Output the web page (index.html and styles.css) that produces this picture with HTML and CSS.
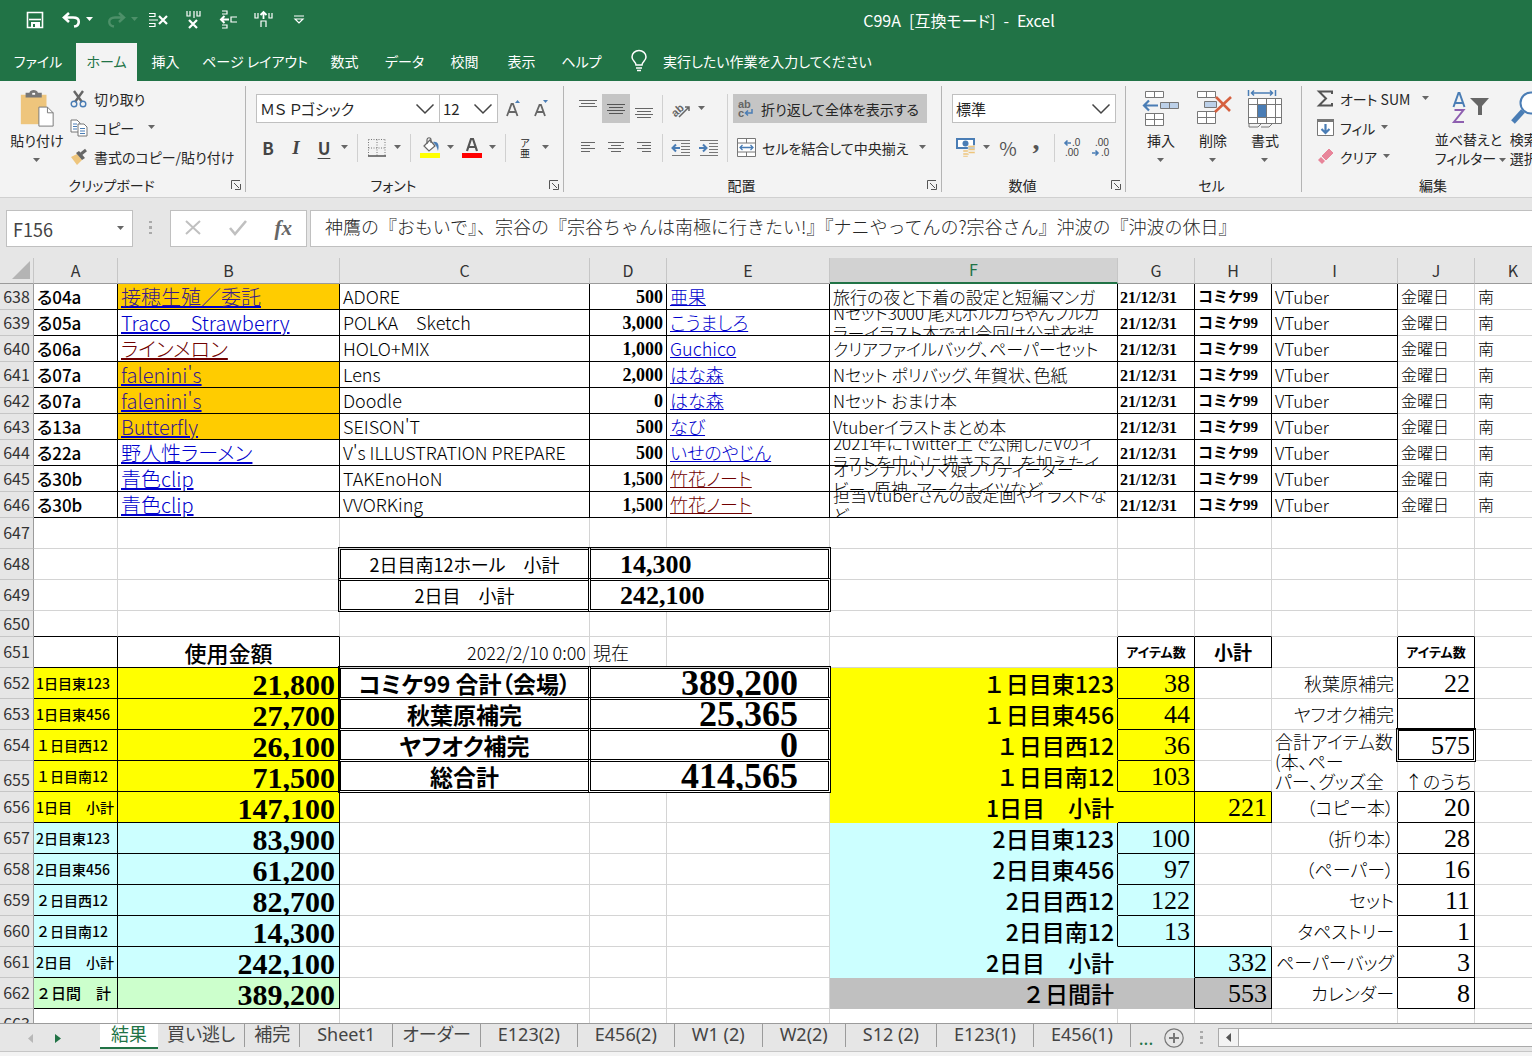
FILE: index.html
```html
<!DOCTYPE html>
<html lang="ja">
<head>
<meta charset="utf-8">
<title>C99A [互換モード] - Excel</title>
<link rel="stylesheet" href="styles.css">
</head>
<body>
<svg width="0" height="0" class="defs" aria-hidden="true">
  <defs>
    <symbol id="caret" viewBox="0 0 8 5"><path d="M0 0h7L3.500 4z" fill="currentColor"/></symbol>
    <symbol id="chev" viewBox="0 0 20 12"><path d="M1.500 1.500 10 10l8.500-8.500" fill="none" stroke="#444" stroke-width="1.500"/></symbol>
    <symbol id="launch" viewBox="0 0 10 10"><path d="M.5 9V.5H9M3 3l5 5M9.500 4v5.500H4" fill="none" stroke="#555"/></symbol>
  </defs>
</svg>

<header class="titlebar">
  <div class="qat">
    <button class="q-save" aria-label="上書き保存"><svg width="18" height="18" viewBox="0 0 18 18"><path d="M1.500 1.500h15v15h-15z" fill="none" stroke="#fff" stroke-width="1.600"/><path d="M3 8.500h12" stroke="#fff" stroke-width="1.600"/><path d="M5 11h9v6H5z" fill="#fff"/><path d="M7 13h2v3H7z" fill="#217346"/></svg></button>
    <button class="q-undo" aria-label="元に戻す"><svg width="19" height="16" viewBox="0 0 19 16"><path d="M7 1 2 5.500 7 10M2.500 5.500H11c8 0 7 8 1 9" fill="none" stroke="#fff" stroke-width="2.600"/></svg><svg class="caret" width="8" height="5"><use href="#caret"/></svg></button>
    <button class="q-redo" aria-label="やり直し"><svg width="19" height="16" viewBox="0 0 19 16"><path d="M12 1l5 4.500L12 10M16.500 5.500H8c-8 0-7 8-1 9" fill="none" stroke="#4d9069" stroke-width="2.400"/></svg><svg class="caret" width="8" height="5"><use href="#caret"/></svg></button>
    <button class="q-tool" aria-label="行の削除"><svg width="20" height="18" viewBox="0 0 20 18"><path d="M0 2.500h6v3H0M0 9h9M0 12.500h6v3H0" fill="none" stroke="#fff" stroke-width="1.200"/><path d="m10 5 8 8m0-8-8 8" stroke="#fff" stroke-width="2.200"/></svg></button>
    <button class="q-tool" aria-label="列の削除"><svg width="18" height="20" viewBox="0 0 18 20"><path d="M2 1v5h3V1M9 1v7M12 1v5h3V1" fill="none" stroke="#fff" stroke-width="1.200"/><path d="m4 10 8 8m0-8-8 8" stroke="#fff" stroke-width="2.200"/></svg></button>
    <button class="q-tool" aria-label="行の挿入"><svg width="18" height="20" viewBox="0 0 18 20"><path d="M2 1h5v3H2M2 15h5v3H2M17 7h-6v5h6" fill="none" stroke="#fff" stroke-width="1.200"/><path d="M1 9.500h8M4.500 6 1 9.500 4.500 13" fill="none" stroke="#fff" stroke-width="2"/></svg></button>
    <button class="q-tool" aria-label="列の挿入"><svg width="20" height="18" viewBox="0 0 20 18"><path d="M1 2v5h3V2M15 2v5h3V2M7 16v-6h5v6" fill="none" stroke="#fff" stroke-width="1.200"/><path d="M9.500 8V1M6.500 4l3-3 3 3" fill="none" stroke="#fff" stroke-width="1.800"/></svg></button>
    <button class="q-tool" aria-label="ユーザー設定"><svg width="12" height="10" viewBox="0 0 12 10"><path d="M1 1h10M2 4h8L6 8z" fill="none" stroke="#fff" stroke-width="1.200"/></svg></button>
  </div>
  <h1 class="title">C99A&ensp;[互換モード]&ensp;-&ensp;Excel</h1>
</header>

<nav class="tabs">
  <button class="file">ファイル</button>
  <button class="active">ホーム</button>
  <button>挿入</button>
  <button class="long">ページ レイアウト</button>
  <button>数式</button>
  <button class="mid">データ</button>
  <button>校閲</button>
  <button>表示</button>
  <button class="mid">ヘルプ</button>
  <button class="tell"><svg width="18" height="22" viewBox="0 0 18 22"><path d="M6 15c0-3-4-4-4-8a7 6.500 0 0 1 14 0c0 4-4 5-4 8zM6 18h6M7 20.500h4" fill="none" stroke="#fff" stroke-width="1.500"/></svg>実行したい作業を入力してください</button>
</nav>

<section class="ribbon" aria-label="リボン">
  <div class="group g-clip">
    <div class="body">
      <button class="big paste"><svg width="36" height="40" viewBox="0 0 36 40"><path d="M1 5h27v31H1z" fill="#eec57c"/><path d="M6 3h4c1-4 8-4 9 0h4v5H6z" fill="#777"/><path d="M13 3h3v2h-3z" fill="#fff"/><path d="M20 18h9l6 6v14H20z" fill="#fff" stroke="#777"/><path d="M29 18v6h6" fill="none" stroke="#777"/></svg><span>貼り付け</span><svg class="caret" width="8" height="5"><use href="#caret"/></svg></button>
      <div class="stack">
        <button><svg width="18" height="18" viewBox="0 0 18 18"><path d="m4 1 8 11M13 1 5 12" stroke="#666" stroke-width="2.400"/><circle cx="4" cy="14" r="2.800" fill="none" stroke="#4a7db5" stroke-width="1.400"/><circle cx="13" cy="14" r="2.800" fill="none" stroke="#4a7db5" stroke-width="1.400"/></svg>切り取り</button>
        <button><svg width="18" height="18" viewBox="0 0 18 18"><path d="M1 1h6l3 3v9H1z" fill="#fff" stroke="#777"/><path d="M3 5h4M3 7.500h4M3 10h4" stroke="#4a7db5"/><path d="M8 5h6l3 3v9H8z" fill="#fff" stroke="#777"/><path d="M10 9.500h5M10 12h5M10 14.500h5" stroke="#4a7db5"/></svg>コピー<svg class="caret far" width="8" height="5"><use href="#caret"/></svg></button>
        <button><svg width="18" height="18" viewBox="0 0 18 18"><path d="m1 9 6-3 5 6-5 5z" fill="#eec57c"/><path d="m6 5 3-2 6 7-3 2z" fill="#666"/><path d="m11 6 5-4" stroke="#666" stroke-width="3"/></svg>書式のコピー/貼り付け</button>
      </div>
    </div>
    <div class="label"><span>クリップボード</span><button aria-label="クリップボードの詳細"><svg width="10" height="10"><use href="#launch"/></svg></button></div>
  </div>

  <div class="group g-font">
    <div class="body rows">
      <div class="row">
        <label class="combo c-name"><select aria-label="フォント"><option>ＭＳ Ｐゴシック</option></select><svg width="20" height="12"><use href="#chev"/></svg></label>
        <label class="combo c-size"><select aria-label="フォント サイズ"><option>12</option></select><svg width="20" height="12"><use href="#chev"/></svg></label>
        <button class="tool grow" aria-label="拡大"><svg width="16" height="18" viewBox="0 0 16 18"><path d="M1 16 5.500 4h1.500l4.500 12M3 12h7" fill="none" stroke="#666" stroke-width="1.800"/><path d="m9 3 2.500-3L14 3z" fill="#4a7db5"/></svg></button>
        <button class="tool" aria-label="縮小"><svg width="16" height="18" viewBox="0 0 16 18"><path d="M1 16 5.500 5h1.500l4 11M3 12h7" fill="none" stroke="#666" stroke-width="1.800"/><path d="m9 0 2.500 3L14 0z" fill="#4a7db5"/></svg></button>
      </div>
      <div class="row tools">
        <button class="tool b">B</button><button class="tool i">I</button><button class="tool u">U</button><button class="drop" aria-label="下線"><svg class="caret" width="8" height="5"><use href="#caret"/></svg></button>
        <i class="sep wide"></i>
        <button class="tool" aria-label="罫線"><svg width="18" height="18" viewBox="0 0 18 18"><path d="M.5.5h17M.5.5v17M17 .5v17M9 .5v17M.5 9h17" fill="none" stroke="#777" stroke-dasharray="1 1.500"/><path d="M0 17h18" stroke="#555" stroke-width="1.500"/></svg></button><button class="drop" aria-label="罫線の種類"><svg class="caret" width="8" height="5"><use href="#caret"/></svg></button>
        <i class="sep wide"></i>
        <button class="tool" aria-label="塗りつぶしの色"><svg width="20" height="21" viewBox="0 0 20 21"><path d="M0 16h20v5H0z" fill="#ff0"/><path d="m4 9 6-6 5 6-6 5z" fill="#fff" stroke="#666" stroke-width="1.200"/><path d="M7 7V3c0-3 4-3 4 0v3" fill="none" stroke="#666" stroke-width="1.200"/><path d="M13 5c4-1 7 2 5 9-1-3-1-5-5-9" fill="#4a7db5"/></svg></button><button class="drop" aria-label="塗りつぶしの色を選ぶ"><svg class="caret" width="8" height="5"><use href="#caret"/></svg></button>
        <button class="tool" aria-label="フォントの色"><svg width="20" height="21" viewBox="0 0 20 21"><path d="M0 16h20v5H0z" fill="#f00"/><path d="m5 14 4-12h2l4 12M6.500 10h7" fill="none" stroke="#555" stroke-width="2.200"/></svg></button><button class="drop" aria-label="フォントの色を選ぶ"><svg class="caret" width="8" height="5"><use href="#caret"/></svg></button>
        <i class="sep wide"></i>
        <button class="tool ruby"><span>ア</span><span>亜</span></button><button class="drop" aria-label="ふりがな"><svg class="caret" width="8" height="5"><use href="#caret"/></svg></button>
      </div>
    </div>
    <div class="label"><span>フォント</span><button aria-label="フォントの詳細"><svg width="10" height="10"><use href="#launch"/></svg></button></div>
  </div>

  <div class="group g-align">
    <div class="body">
      <div class="rows">
        <div class="row">
          <button class="tool" aria-label="上揃え"><svg width="18" height="18" viewBox="0 0 18 18"><path d="M0 .5h18M2 3.500h14M0 6.500h18" stroke="#666"/></svg></button>
          <button class="tool on" aria-label="上下中央揃え"><svg width="18" height="18" viewBox="0 0 18 18"><path d="M0 4.500h18M2 7.500h14M0 10.500h18M2 13.500h14" stroke="#555"/></svg></button>
          <button class="tool" aria-label="下揃え"><svg width="18" height="18" viewBox="0 0 18 18"><path d="M0 8.500h18M2 11.500h14M0 14.500h18M2 17.500h14" stroke="#666"/></svg></button>
          <i class="sep"></i>
          <button class="tool" aria-label="方向"><svg width="20" height="18" viewBox="0 0 20 18"><text x="-1" y="14" class="glyph-ab" transform="rotate(-42 6 9)">ab</text><path d="M8 17 18 7M14 7h4v4" fill="none" stroke="#666" stroke-width="1.500"/></svg></button><button class="drop" aria-label="方向を選ぶ"><svg class="caret" width="8" height="5"><use href="#caret"/></svg></button>
        </div>
        <div class="row">
          <button class="tool" aria-label="左揃え"><svg width="16" height="14" viewBox="0 0 16 14"><path d="M1 1.500h14M1 4.500h9M1 7.500h14M1 10.500h9" stroke="#666"/></svg></button>
          <button class="tool" aria-label="中央揃え"><svg width="16" height="14" viewBox="0 0 16 14"><path d="M0 1.500h16M3 4.500h10M0 7.500h16M3 10.500h10" stroke="#666"/></svg></button>
          <button class="tool" aria-label="右揃え"><svg width="16" height="14" viewBox="0 0 16 14"><path d="M1 1.500h14M6 4.500h9M1 7.500h14M6 10.500h9" stroke="#666"/></svg></button>
          <i class="sep"></i>
          <button class="tool" aria-label="インデントを減らす"><svg width="20" height="18" viewBox="0 0 20 18"><path d="M1 1.500h18M10 4.500h9M10 7.500h9M10 10.500h9M10 13.500h9M1 16.500h18" stroke="#777"/><path d="M1 9h8M5 5.500 1.500 9 5 12.500" fill="none" stroke="#4a7db5" stroke-width="2"/></svg></button>
          <button class="tool" aria-label="インデントを増やす"><svg width="20" height="18" viewBox="0 0 20 18"><path d="M1 1.500h18M10 4.500h9M10 7.500h9M10 10.500h9M10 13.500h9M1 16.500h18" stroke="#777"/><path d="M0 9h8M4 5.500 7.500 9 4 12.500" fill="none" stroke="#4a7db5" stroke-width="2"/></svg></button>
        </div>
      </div>
      <i class="sep tall"></i>
      <div class="rows">
        <button class="wide on"><svg width="18" height="20" viewBox="0 0 18 20"><text x="1" y="9" class="glyph-ab">ab</text><text x="1" y="18" class="glyph-ab">c</text><path d="M15 10v4H9M11 11.500 8.500 14l2.500 2.500" fill="none" stroke="#4a7db5" stroke-width="1.500"/></svg>折り返して全体を表示する</button>
        <button class="wide"><svg width="19" height="19" viewBox="0 0 19 19"><path d="M.5.5h18v18H.5zM.5 5h18M.5 14h18M9.500 0v5M9.500 14v5" fill="#fff" stroke="#777"/><path d="M3 9.500h13M5.500 7 3 9.500 5.500 12M13.500 7 16 9.500 13.500 12" fill="none" stroke="#4a7db5" stroke-width="1.300"/></svg>セルを結合して中央揃え<svg class="caret end" width="8" height="5"><use href="#caret"/></svg></button>
      </div>
    </div>
    <div class="label"><span>配置</span><button aria-label="配置の詳細"><svg width="10" height="10"><use href="#launch"/></svg></button></div>
  </div>

  <div class="group g-num">
    <div class="body rows">
      <div class="row"><label class="combo c-format"><select aria-label="表示形式"><option>標準</option></select><svg width="20" height="12"><use href="#chev"/></svg></label></div>
      <div class="row">
        <button class="tool" aria-label="通貨"><svg width="20" height="19" viewBox="0 0 20 19"><path d="M0 0h19v11H0z" fill="#4a7db5"/><path d="M2 2h15v7H2z" fill="#fff"/><circle cx="9.500" cy="5.500" r="3" fill="#4a7db5"/><path d="M12 7.500h7v2h-7zM12 10.500h7v2h-7zM12 13.500h7v2h-7zM7 12h6v2H7zM7 15h6v2H7zM7 17.500h5v1.500H7z" fill="#eec57c" stroke="#f3f3f3" stroke-width=".5"/></svg></button><button class="drop" aria-label="通貨を選ぶ"><svg class="caret" width="8" height="5"><use href="#caret"/></svg></button>
        <button class="tool pct">%</button>
        <button class="tool comma">,</button>
        <i class="sep"></i>
        <button class="tool" aria-label="小数点以下の表示桁数を増やす"><svg width="18" height="20" viewBox="0 0 18 20"><text x="8" y="8" class="glyph-n">.0</text><text x="1" y="18" class="glyph-n">.00</text><path d="M1 5h6M3.500 2.500 1 5l2.500 2.500" fill="none" stroke="#4a7db5" stroke-width="1.600"/></svg></button>
        <button class="tool" aria-label="小数点以下の表示桁数を減らす"><svg width="18" height="20" viewBox="0 0 18 20"><text x="3" y="8" class="glyph-n">.00</text><text x="9" y="18" class="glyph-n">.0</text><path d="M0 15h6M3.500 12.500 6 15l-2.500 2.500" fill="none" stroke="#4a7db5" stroke-width="1.600"/></svg></button>
      </div>
    </div>
    <div class="label"><span>数値</span><button aria-label="数値の詳細"><svg width="10" height="10"><use href="#launch"/></svg></button></div>
  </div>

  <div class="group g-cell">
    <div class="body">
      <button class="big"><svg width="38" height="38" viewBox="0 0 38 38"><path d="M3.500 1.500h18v6h-18zM12.500 1.500v6M3.500 23.500h18v12h-18zM12.500 23.500v12M3.500 29.500h18" fill="#fff" stroke="#777"/><path d="M18.500 12.500h18v6h-18zM27.500 12.500v6" fill="#bcd0e8" stroke="#777"/><path d="M2 15.500h14M7 10.500l-5 5 5 5" fill="none" stroke="#4a7db5" stroke-width="2.200"/></svg><span>挿入</span><svg class="caret" width="8" height="5"><use href="#caret"/></svg></button>
      <button class="big"><svg width="38" height="38" viewBox="0 0 38 38"><path d="M3.500 1.500h18v6h-18zM12.500 1.500v6M3.500 21.500h18v12h-18zM12.500 21.500v12M3.500 27.500h18" fill="#fff" stroke="#777"/><path d="M10.500 11.500h12v6h-12z" fill="#bcd0e8" stroke="#777"/><path d="m22 7 14 14M37 7 21 22" stroke="#d6603f" stroke-width="2.600"/></svg><span>削除</span><svg class="caret" width="8" height="5"><use href="#caret"/></svg></button>
      <button class="big"><svg width="38" height="38" viewBox="0 0 38 38"><path d="M2.500 0v6M29.500 0v6M5 3h22M8 .5 5.500 3 8 5.500M24 .5 26.500 3 24 5.500" fill="none" stroke="#4a7db5" stroke-width="1.500"/><path d="M2.500 8.500h33v25h-33zM2.500 14.500h33M2.500 27.500h33M11.500 8.500v25M20.500 8.500v25M29.500 8.500v25" fill="#fff" stroke="#777"/><path d="M12 15h8v12h-8z" fill="#4a7db5"/><path d="M3 33v4h9l3-3M15 37h8l3-3" fill="none" stroke="#777"/></svg><span>書式</span><svg class="caret" width="8" height="5"><use href="#caret"/></svg></button>
    </div>
    <div class="label"><span>セル</span></div>
  </div>

  <div class="group g-edit">
    <div class="body">
      <div class="stack">
        <button><svg width="17" height="17" viewBox="0 0 17 17"><path d="M15 4V1.500H2L9 8.500 2 15.500h13V13" fill="none" stroke="#555" stroke-width="2"/></svg>オート SUM<svg class="caret far" width="8" height="5"><use href="#caret"/></svg></button>
        <button><svg width="17" height="17" viewBox="0 0 17 17"><path d="M.5.5h16v16H.5z" fill="#fff" stroke="#777"/><path d="M0 0h17v3H0z" fill="#777"/><path d="M8.500 5v9M4.500 10l4 4 4-4" fill="none" stroke="#4a7db5" stroke-width="2.200"/></svg>フィル<svg class="caret" width="8" height="5"><use href="#caret"/></svg></button>
        <button><svg width="17" height="17" viewBox="0 0 17 17"><path d="m5 8 7-7 4 4-7 7z" fill="#e8859a" stroke="#e8859a" stroke-linejoin="round"/><path d="m1 12 3-3 4 4-3 3z" fill="#e8859a"/></svg>クリア<svg class="caret" width="8" height="5"><use href="#caret"/></svg></button>
      </div>
      <button class="big sort"><svg width="38" height="38" viewBox="0 0 38 38"><path d="M1.500 17 6.500 3h1l5 14M3 13h8" fill="none" stroke="#4a7db5" stroke-width="2"/><path d="M2.500 20h9L2 32h10" fill="none" stroke="#8e5fb0" stroke-width="2"/><path d="M18 8h19l-7 8v9h-4v-9z" fill="#666"/></svg><span>並べ替えと<br>フィルター <svg class="caret" width="8" height="5"><use href="#caret"/></svg></span></button>
      <button class="big find"><svg width="38" height="38" viewBox="0 0 38 38"><circle cx="20" cy="13" r="10.500" fill="#fff" stroke="#4a7db5" stroke-width="2"/><path d="M12 21 2 32" stroke="#4a7db5" stroke-width="5"/></svg><span>検索と<br>選択</span></button>
    </div>
    <div class="label"><span>編集</span></div>
  </div>
</section>

<section class="formula">
  <div class="namebox"><input aria-label="名前ボックス" value="F156"><svg class="caret" width="8" height="5"><use href="#caret"/></svg></div>
  <svg class="grip" width="4" height="16" viewBox="0 0 4 16"><path d="M0 1h3v2H0zM0 6h3v3H0zM0 12h3v2H0z" fill="#aaa"/></svg>
  <div class="fx">
    <button aria-label="キャンセル"><svg width="16" height="16" viewBox="0 0 16 16"><path d="m1 1 14 13M15 1 1 14" stroke="#c0c0c0" stroke-width="2"/></svg></button>
    <button aria-label="入力"><svg width="18" height="16" viewBox="0 0 18 16"><path d="m1 8 5 6L17 1" fill="none" stroke="#c0c0c0" stroke-width="2.600"/></svg></button>
    <button class="fxb">fx</button>
  </div>
  <input class="fbar" aria-label="数式バー" value="神鷹の『おもいで』、宗谷の『宗谷ちゃんは南極に行きたい!』『ナニやってんの?宗谷さん』沖波の『沖波の休日』">
</section>

<main class="sheet">
<table>
<colgroup><col class="w0"><col class="wa"><col class="wb"><col class="wc"><col class="wd"><col class="we"><col class="wf"><col class="wd"><col class="wd"><col class="wi"><col class="wd"><col class="wd"></colgroup>
<thead><tr><th class="corner"><svg width="18" height="18" viewBox="0 0 18 18"><path d="M18 0v18H0z" fill="#b4b4b4"/></svg></th><th>A</th><th>B</th><th>C</th><th>D</th><th>E</th><th class="sel">F</th><th>G</th><th>H</th><th>I</th><th>J</th><th>K</th></tr></thead>
<tbody class="list">
<tr><th>638</th><td>る04a</td><td class="or"><a href="#">接穂生殖／委託</a></td><td>ADORE</td><td>500</td><td><a href="#">亜果</a></td><td>旅行の夜と下着の設定と短編マンガ</td><td>21/12/31</td><td>コミケ99</td><td>VTuber</td><td>金曜日</td><td>南</td></tr>
<tr><th>639</th><td>る05a</td><td><a href="#">Traco　Strawberry</a></td><td>POLKA　Sketch</td><td>3,000</td><td><a href="#">こうましろ</a></td><td><div class="clip">Nセット3000 尾丸ポルカちゃんフルカ<br>ラーイラスト本です!今回は公式衣装</div></td><td>21/12/31</td><td>コミケ99</td><td>VTuber</td><td>金曜日</td><td>南</td></tr>
<tr><th>640</th><td>る06a</td><td><a class="seen" href="#">ラインメロン</a></td><td>HOLO+MIX</td><td>1,000</td><td><a href="#">Guchico</a></td><td>クリアファイルバッグ、ペーパーセット</td><td>21/12/31</td><td>コミケ99</td><td>VTuber</td><td>金曜日</td><td>南</td></tr>
<tr><th>641</th><td>る07a</td><td class="or"><a href="#">falenini's</a></td><td>Lens</td><td>2,000</td><td><a href="#">はな森</a></td><td>Nセット ポリバッグ、年賀状、色紙</td><td>21/12/31</td><td>コミケ99</td><td>VTuber</td><td>金曜日</td><td>南</td></tr>
<tr><th>642</th><td>る07a</td><td class="or"><a href="#">falenini's</a></td><td>Doodle</td><td>0</td><td><a href="#">はな森</a></td><td>Nセット おまけ本</td><td>21/12/31</td><td>コミケ99</td><td>VTuber</td><td>金曜日</td><td>南</td></tr>
<tr><th>643</th><td>る13a</td><td class="or"><a href="#">Butterfly</a></td><td>SEISON'T</td><td>500</td><td><a href="#">なび</a></td><td>Vtuberイラストまとめ本</td><td>21/12/31</td><td>コミケ99</td><td>VTuber</td><td>金曜日</td><td>南</td></tr>
<tr><th>644</th><td>る22a</td><td><a href="#">野人性ラーメン</a></td><td>V's ILLUSTRATION PREPARE</td><td>500</td><td><a href="#">いせのやじん</a></td><td><div class="clip">2021年にTwitter上で公開したVのイ<br>ラストを中心に描き下ろしを加えたイ</div></td><td>21/12/31</td><td>コミケ99</td><td>VTuber</td><td>金曜日</td><td>南</td></tr>
<tr><th>645</th><td>る30b</td><td><a href="#">青色clip</a></td><td>TAKEnoHoN</td><td>1,500</td><td><a class="seen" href="#">竹花ノート</a></td><td><div class="clip">オリジナル、ウマ娘プリティーダー<br>ビー、原神、アークナイツなど</div></td><td>21/12/31</td><td>コミケ99</td><td>VTuber</td><td>金曜日</td><td>南</td></tr>
<tr><th>646</th><td>る30b</td><td><a href="#">青色clip</a></td><td>VVORKing</td><td>1,500</td><td><a class="seen" href="#">竹花ノート</a></td><td><div class="clip">担当Vtuberさんの設定画やイラストな<br>ど</div></td><td>21/12/31</td><td>コミケ99</td><td>VTuber</td><td>金曜日</td><td>南</td></tr>
</tbody>
<tbody class="sum">
<tr><th>647</th><td></td><td></td><td></td><td></td><td></td><td></td><td></td><td></td><td></td><td></td><td></td></tr>
<tr><th>648</th><td></td><td></td><td class="dbl sub">2日目南12ホール　小計</td><td class="dbl subn" colspan="2">14,300</td><td></td><td></td><td></td><td></td><td></td><td></td></tr>
<tr><th>649</th><td></td><td></td><td class="dbl sub">2日目　小計</td><td class="dbl subn" colspan="2">242,100</td><td></td><td></td><td></td><td></td><td></td><td></td></tr>
<tr class="short"><th>650</th><td class="kb"></td><td class="kb"></td><td></td><td></td><td></td><td></td><td class="kb"></td><td class="kb"></td><td></td><td class="kb"></td><td></td></tr>
<tr><th>651</th><td class="k"></td><td class="k cap">使用金額</td><td class="thin r">2022/2/10 0:00</td><td class="thin">現在</td><td></td><td class="kr"></td><td class="k items">アイテム数</td><td class="k total">小計</td><td class="kr"></td><td class="k items">アイテム数</td><td></td></tr>
<tr><th>652</th><td class="k y day">1日目東123</td><td class="k y amt"><div>21,800</div></td><td class="dbl grand">コミケ99 合計（会場）</td><td class="dbl grandn" colspan="2"><div>389,200</div></td><td class="y fl kr">１日目東123</td><td class="y k num">38</td><td></td><td class="kr thin r">秋葉原補完</td><td class="k num">22</td><td></td></tr>
<tr><th>653</th><td class="k y day">1日目東456</td><td class="k y amt"><div>27,700</div></td><td class="dbl grand">秋葉原補完</td><td class="dbl grandn" colspan="2"><div>25,365</div></td><td class="y fl kr">１日目東456</td><td class="y k num">44</td><td></td><td class="kr thin r">ヤフオク補完</td><td class="k num"></td><td></td></tr>
<tr><th>654</th><td class="k y day">１日目西12</td><td class="k y amt"><div>26,100</div></td><td class="dbl grand">ヤフオク補完</td><td class="dbl grandn" colspan="2"><div>0</div></td><td class="y fl kr">１日目西12</td><td class="y k num">36</td><td></td><td class="thin note" rowspan="2">合計アイテム数<br>(本、ペー<br>パー、グッズ全</td><td class="dbl num">575</td><td></td></tr>
<tr><th class="low">655</th><td class="k y day">１日目南12</td><td class="k y amt"><div>71,500</div></td><td class="dbl grand">総合計</td><td class="dbl grandn" colspan="2"><div>414,565</div></td><td class="y fl kr">１日目南12</td><td class="y k num">103</td><td class="kb"></td><td class="kb thin r low">↑のうち</td><td></td></tr>
<tr><th>656</th><td class="k y day">1日目　小計</td><td class="k y amt"><div>147,100</div></td><td></td><td></td><td></td><td class="y fl">1日目　小計</td><td class="y k"></td><td class="y k num">221</td><td class="kr thin r">（コピー本）</td><td class="k num">20</td><td></td></tr>
<tr><th>657</th><td class="k c day">2日目東123</td><td class="k c amt"><div>83,900</div></td><td></td><td></td><td></td><td class="c fl kr">2日目東123</td><td class="c k num">100</td><td></td><td class="kr thin r">（折り本）</td><td class="k num">28</td><td></td></tr>
<tr><th>658</th><td class="k c day">2日目東456</td><td class="k c amt"><div>61,200</div></td><td></td><td></td><td></td><td class="c fl kr">2日目東456</td><td class="c k num">97</td><td></td><td class="kr thin r">（ペーパー）</td><td class="k num">16</td><td></td></tr>
<tr><th>659</th><td class="k c day">２日目西12</td><td class="k c amt"><div>82,700</div></td><td></td><td></td><td></td><td class="c fl kr">2日目西12</td><td class="c k num">122</td><td></td><td class="kr thin r">セット</td><td class="k num">11</td><td></td></tr>
<tr><th>660</th><td class="k c day">２日目南12</td><td class="k c amt"><div>14,300</div></td><td></td><td></td><td></td><td class="c fl kr">2日目南12</td><td class="c k num">13</td><td class="kb"></td><td class="kr thin r">タペストリー</td><td class="k num">1</td><td></td></tr>
<tr><th>661</th><td class="k c day">2日目　小計</td><td class="k c amt"><div>242,100</div></td><td></td><td></td><td></td><td class="c fl">2日目　小計</td><td class="c kr"></td><td class="c k num">332</td><td class="kr thin r">ペーパーバッグ</td><td class="k num">3</td><td></td></tr>
<tr><th>662</th><td class="k g day more-day">２日間　計</td><td class="k g amt"><div>389,200</div></td><td></td><td></td><td></td><td class="s fl">２日間計</td><td class="s kr"></td><td class="s k num">553</td><td class="kr thin r">カレンダー</td><td class="k num">8</td><td></td></tr>
<tr><th>663</th><td></td><td></td><td></td><td></td><td></td><td></td><td></td><td></td><td></td><td></td><td></td></tr>
</tbody>
</table>
</main>

<footer class="sheetbar">
  <div class="nav"><button aria-label="前のシート"><svg width="6" height="9" viewBox="0 0 6 9"><path d="M5 0v9L0 4.500z" fill="#b8b8b8"/></svg></button><button aria-label="次のシート"><svg width="6" height="9" viewBox="0 0 6 9"><path d="M0 0v9l6-4.500z" fill="#217346"/></svg></button></div>
  <button class="st active">結果</button>
  <button class="st jp">買い逃し</button>
  <button class="st jp">補完</button>
  <button class="st">Sheet1</button>
  <button class="st jp">オーダー</button>
  <button class="st">E123(2)</button>
  <button class="st">E456(2)</button>
  <button class="st">W1 (2)</button>
  <button class="st">W2(2)</button>
  <button class="st">S12 (2)</button>
  <button class="st">E123(1)</button>
  <button class="st">E456(1)</button>
  <button class="more">...</button>
  <button class="add" aria-label="新しいシート"><svg width="20" height="20" viewBox="0 0 20 20"><circle cx="10" cy="10" r="9.200" fill="none" stroke="#777" stroke-width="1.200"/><path d="M5 10h10M10 5v10" stroke="#777" stroke-width="2"/></svg></button>
  <svg class="dots" width="4" height="14" viewBox="0 0 4 14"><path d="M0 0h3v2H0zM0 5h3v3H0zM0 11h3v2H0z" fill="#aaa"/></svg>
  <div class="scroll"><button aria-label="左へスクロール"><svg width="6" height="9" viewBox="0 0 6 9"><path d="M5 0v9L0 4.500z" fill="#555"/></svg></button><span></span></div>
</footer>
<div class="status"></div>
</body>
</html>
```
FILE: styles.css
```css
* { box-sizing: border-box; }
body {
  margin: 0;
  height: 100vh;
  display: flex;
  flex-direction: column;
  overflow: hidden;
  background: #e6e6e6;
  color: #262626;
  font: 14px/20px "Noto Sans CJK JP", "Noto Sans", sans-serif;
  font-feature-settings: "palt";
}
button, input, select { font: inherit; font-feature-settings: inherit; color: inherit; }
button { padding: 0; border: 0; background: none; white-space: nowrap; }
svg { display: block; flex: none; overflow: visible; }
.defs { position: absolute; }
.caret { color: #666; }
.glyph-ab { font: bold 11px "Liberation Sans", sans-serif; fill: #666; }
.glyph-n { font: 10px "Liberation Sans", sans-serif; fill: #444; }

/* title bar */
.titlebar { display: flex; align-items: center; height: 43px; flex: none; padding-bottom: 4px; background: #217346; color: #fff; }
.qat { display: flex; align-items: center; width: 386px; padding-left: 26px; }
.qat button { display: flex; align-items: center; height: 24px; }
.qat .caret { color: #fff; margin-left: 5px; }
.q-save { width: 36px; }
.q-undo { width: 45px; }
.q-redo { width: 34px; }
.qat .q-redo .caret { color: #4d9069; }
.qat .q-tool { width: 35px; justify-content: center; }
.title { flex: 1; margin: 0; font-size: 16px; font-weight: 400; text-align: center; }

/* ribbon tabs */
.tabs { display: flex; height: 38px; flex: none; padding-bottom: 0; background: #217346; color: #fff; }
.tabs button { width: 57px; padding-bottom: 2px; }
.tabs .file { width: 76px; }
.tabs .active { width: 61px; background: #f3f3f3; color: #217346; }
.tabs .long { width: 122px; }
.tabs .mid { width: 63px; }
.tabs .tell { display: flex; align-items: center; gap: 15px; width: auto; margin-left: 17px; }

/* ribbon */
.ribbon { display: flex; height: 117px; flex: none; padding: 5px 0; background: #f3f3f3; border-bottom: 1px solid #d0d0d0; overflow: hidden; }
.group { display: flex; flex-direction: column; flex: none; border-right: 1px solid #b4b4b4; }
.g-clip { width: 246px; }
.g-font { width: 318px; }
.g-align { width: 378px; }
.g-num { width: 184px; }
.g-cell { width: 176px; }
.g-edit { width: 266px; border: 0; }
.body { display: flex; flex: 1; }
.label { display: flex; align-items: center; height: 14px; line-height: 14px; padding-right: 4px; }
.label span { flex: 1; text-align: center; }
.label span:not(:last-child) { padding-right: 8px; }
.rows { display: flex; flex-direction: column; gap: 10px; padding-top: 8px; }
.row { display: flex; height: 29px; align-items: center; }
.stack { display: flex; flex-direction: column; }
.stack button { display: flex; align-items: center; height: 29px; gap: 6px; }
.stack .far { margin-left: 8px; }
.big { display: flex; flex-direction: column; align-items: center; width: 52px; padding-top: 4px; }
.big > svg:first-child { height: 38px; }
.big > span { margin: 2px 0 8px; }
.g-clip .stack { margin-top: -2px; }
.paste { width: 70px; padding-left: 4px; }
.g-font .body { padding-left: 10px; }
.tools { margin-left: -2px; }
.tool { display: flex; align-items: center; justify-content: center; width: 28px; height: 29px; flex: none; }
.grow { margin-left: 2px; }
.drop { display: flex; align-items: center; justify-content: center; width: 14px; height: 29px; flex: none; }
.on { background: #c5c5c5; }
.b, .u { font-weight: 700; font-size: 17px; color: #444; }
.i { font: italic bold 19px "Liberation Serif", serif; color: #444; }
.u { text-decoration: underline; text-underline-offset: 3px; }
.pct { font-size: 19px; color: #555; }
.comma { font: bold 28px/10px "Liberation Serif", serif; color: #555; padding-bottom: 16px; }
.ruby { flex-direction: column; font-size: 10px; line-height: 10px; }
.sep { width: 1px; height: 28px; margin: 0 4px; background: #d0d0d0; flex: none; }
.sep.wide { margin: 0 5px; }
.sep.tall { height: 68px; margin: 8px 5px 0 4px; }
.combo { display: grid; grid-template-columns: 1fr 24px; align-items: center; height: 29px; background: #fff; border: 1px solid #c0c0c0; font-size: 15px; }
.combo select { grid-area: 1 / 1 / 2 / 3; height: 27px; width: 100%; padding: 0 3px; border: 0; background: none; appearance: none; }
.combo svg { grid-area: 1 / 2; pointer-events: none; }
.c-name { width: 184px; }
.c-size { width: 59px; margin-left: -1px; }
.c-format { width: 164px; }
.g-align .body { padding-left: 10px; }
.wide { display: flex; align-items: center; }
button.wide { width: 194px; height: 29px; gap: 6px; padding: 0 4px; }
.wide .end { margin-left: 5px; }
.g-num .body { padding-left: 10px; }
.g-cell .body { padding-left: 9px; }
.g-edit .body { padding-left: 15px; }
.g-edit .stack { width: 118px; margin-top: -2px; }
.g-edit .stack .far { margin-left: 6px; }
.big.sort { width: 72px; }
.big.find { width: 46px; }
.sort span, .find span { line-height: 19px; text-align: left; }
.big span svg { display: inline-block; vertical-align: middle; }

/* formula bar */
.formula { display: flex; align-items: center; height: 60px; flex: none; }
.namebox { display: flex; align-items: center; width: 127px; height: 37px; margin-left: 6px; padding-right: 7px; background: #fff; border: 1px solid #c0c0c0; }
.namebox input { flex: 1; min-width: 0; border: 0; padding: 2px 6px 0; background: none; font-size: 18px; color: #444; }
.grip { margin: 0 17px 0 16px; }
.fx { display: flex; align-items: center; justify-content: space-around; width: 137px; height: 37px; background: #fff; border: 1px solid #c0c0c0; }
.fxb { font: italic bold 21px "Liberation Serif", serif; color: #666; }
.fbar { flex: 1; min-width: 0; height: 37px; margin-left: 3px; padding: 0 14px 4px; border: 1px solid #c0c0c0; border-right: 0; background: #fff; font-size: 18px; font-weight: 300; font-feature-settings: normal; }

/* grid */
.sheet { flex: 1; min-height: 0; overflow: hidden; background: #fff; }
table { table-layout: fixed; width: 1552px; border-spacing: 0; }
.w0 { width: 34px; }
.wa { width: 84px; }
.wb { width: 222px; }
.wc { width: 250px; }
.wd { width: 77px; }
.we { width: 163px; }
.wf { width: 288px; }
.wi { width: 126px; }
th { padding: 0 0 2px; height: 26px; background: #e6e6e6; border: solid #c6c6c6; border-width: 0 1px 1px 0; font-size: 16px; font-weight: 400; color: #333; }
thead th { border-bottom-color: #9b9b9b; }
tbody th { border-right-color: #9b9b9b; }
.corner svg { margin: 0 3px 0 auto; }
th.sel { background: #d2d2d2; color: #217346; border-bottom: 2px solid #217346; }
td { padding: 0 3px; border: solid #d4d4d4; border-width: 0 1px 1px 0; background: #fff; color: #000; white-space: nowrap; line-height: 20px; overflow: hidden; }
.list tr { height: 26px; }
.list td { font-size: 17px; font-weight: 300; border-color: #000; }
.list td:nth-child(2) { font-weight: 500; }
.list td:nth-child(3) { font-size: 20px; line-height: 22px; padding-top: 1px; }
.list td:nth-child(4) { font-size: 18px; padding-bottom: 2px; }
.list td:nth-child(5) { font: bold 18px/20px "Liberation Serif", serif; text-align: right; }
.list td:nth-child(6) { font-size: 18px; padding-bottom: 2px; }
.list td:nth-child(8) { font: bold 16px/20px "Liberation Serif", serif; padding: 2px 2px 0; }
.list td:nth-child(9) { font: bold 15px/20px "Liberation Serif", "Noto Sans CJK JP", serif; }
.list td:nth-child(n+11) { font-size: 16px; font-weight: 300; padding-bottom: 2px; border-color: #d4d4d4; }
.list tr:last-child td:nth-child(n) { border-bottom-color: #000; }
.list tr:last-child td:nth-child(n+11) { border-bottom-color: #d4d4d4; }
a { color: #0000cd; text-decoration: underline; }
a.seen { color: #700000; }
td.or { background: #fc0; }
.or a { color: #3a1a8a; text-decoration-color: #0000cd; }
.clip { display: flex; align-items: center; height: 25px; overflow: hidden; line-height: 20px; }
.sum tr { height: 31px; }
.sum tr.short { height: 26px; }
td.k { border-color: #000; }
td.kb { border-bottom-color: #000; }
td.y { background: #ff0; }
td.c { background: #cff; }
td.g { background: #cfc; }
td.s { background: #c0c0c0; }
td.y:not(.k) { border-color: #ff0; }
td.c:not(.k) { border-color: #cff; }
td.s:not(.k) { border-color: #c0c0c0; }
td.kr.kr { border-right-color: #000; }
td.r { text-align: right; }
.dbl { position: relative; overflow: visible; border-color: #fff; }
.dbl::after { content: ""; position: absolute; inset: -2px; border: 3px double #000; pointer-events: none; }
.sub { text-align: center; font-size: 18px; }
.subn { padding: 2px 0 0 30px; font: bold 26px/28px "Liberation Serif", serif; }
.cap { text-align: center; font-size: 22px; font-weight: 500; font-feature-settings: normal; }
.thin { font-size: 18px; font-weight: 300; }
.items { text-align: center; font-size: 13px; font-weight: 700; }
.total { text-align: center; font-size: 19px; font-weight: 700; }
.day { font-size: 14px; font-weight: 500; font-feature-settings: normal; padding: 0 0 0 2px; }
.more-day { font-size: 15px; }
.amt { font: bold 30px/34px "Liberation Serif", serif; text-align: right; padding-right: 4px; vertical-align: top; }
.amt div, .grandn div { height: 30px; overflow: hidden; }
.grand { text-align: center; font-size: 23px; font-weight: 700; }
.grandn { font: bold 36px/30px "Liberation Serif", serif; text-align: right; padding-right: 31px; vertical-align: top; }
.fl { text-align: right; font-size: 23px; font-weight: 500; font-feature-settings: normal; line-height: 28px; }
.num { text-align: right; font: 26px/28px "Liberation Serif", serif; padding: 2px 4px 0; }
.note { vertical-align: bottom; line-height: 20px; }
.low { vertical-align: bottom; }

/* sheet tabs */
.sheetbar { display: flex; align-items: center; height: 29px; flex: none; border-top: 1px solid #9b9b9b; border-bottom: 1px solid #c6c6c6; background: #e6e6e6; font-family: "Noto Sans", "Noto Sans CJK JP", sans-serif; font-size: 18px; color: #444; }
.nav { display: flex; justify-content: space-between; width: 100px; flex: none; padding: 2px 39px 0 28px; }
.st { align-self: flex-start; height: 23px; flex: none; padding: 0 17px 3px; border-right: 1px solid #9b9b9b; line-height: 20px; }
.st.jp { padding: 0 9px 3px; }
.st.active { height: 25px; padding: 0 11px 3px; background: #fff; color: #217346; border-right: 0; border-bottom: 2px solid #217346; }
.more { width: 30px; color: #217346; }
.add { margin-left: 3px; }
.dots { margin: 0 14px 0 16px; }
.scroll { display: flex; flex: 1; height: 19px; border: 1px solid #aaa; border-right: 0; background: #fff; }
.scroll button { display: flex; align-items: center; justify-content: center; width: 20px; border-right: 1px solid #aaa; background: #f3f3f3; }
.status { height: 4px; flex: none; background: #f3f3f3; }
```
